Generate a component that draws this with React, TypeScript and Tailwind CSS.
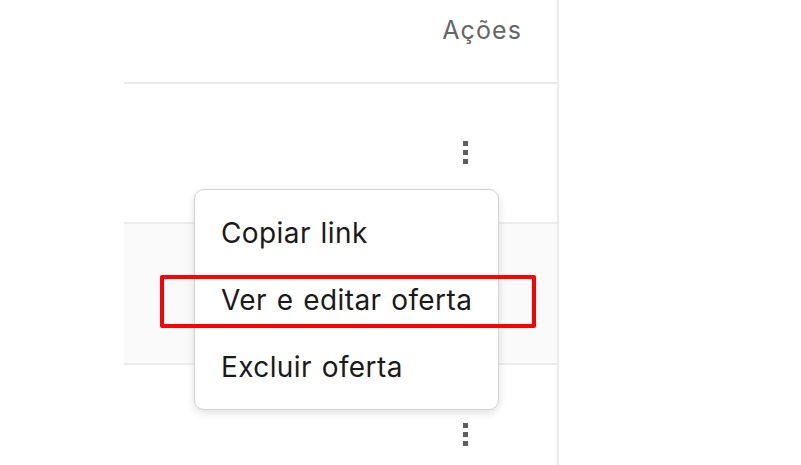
import React from "react";

function Dots() {
  return (
    <div className="flex flex-col gap-[4px]">
      <div className="w-[5px] h-[5px] bg-[#5f5f5f]" />
      <div className="w-[5px] h-[5px] bg-[#5f5f5f]" />
      <div className="w-[5px] h-[5px] bg-[#5f5f5f]" />
    </div>
  );
}

export default function App() {
  return (
    <div className="relative w-[801px] h-[465px] bg-white overflow-hidden" style={{ fontFamily: "Inter, 'Noto Sans', sans-serif" }}>
      <div className="flex h-full">
        <div className="w-[124px]" />
        <div className="w-[435px] border-r-2 border-[#ebebeb] flex flex-col">
          <div className="h-[84px] border-b-2 border-[#e8e8e8] flex items-center justify-end pr-[35px] pb-[20px]">
            <span className="text-[25px] text-[#666666] tracking-[1.1px]">Ações</span>
          </div>
          <div className="h-[140px] border-b-2 border-[#ececec] flex items-center justify-end pr-[89px] pb-[2px]">
            <Dots />
          </div>
          <div className="h-[141px] bg-[#fafafa] border-b-2 border-[#ececec]" />
          <div className="flex-1 flex items-start justify-end pr-[89px] pt-[58px]">
            <Dots />
          </div>
        </div>
      </div>
      <div className="absolute left-[194px] top-[189px] w-[305px] h-[221px] bg-white rounded-[10px] border border-[#d4d4d4] shadow-[0_3px_8px_rgba(0,0,0,0.12)] flex flex-col justify-center pl-[26px]">
        <div className="h-[67px] flex items-center text-[28px] text-[#1a1a1a] tracking-[0.4px] [word-spacing:1.5px]">Copiar link</div>
        <div className="h-[67px] flex items-center text-[28px] text-[#1a1a1a] tracking-[0.4px] [word-spacing:1.5px]">Ver e editar oferta</div>
        <div className="h-[67px] flex items-center text-[28px] text-[#1a1a1a] tracking-[0.4px] [word-spacing:1.5px]">Excluir oferta</div>
      </div>
      <div className="absolute left-[160px] top-[275px] w-[376px] h-[53px] border-[4px] border-[#ff0000] rounded-[2px]" />
    </div>
  );
}
